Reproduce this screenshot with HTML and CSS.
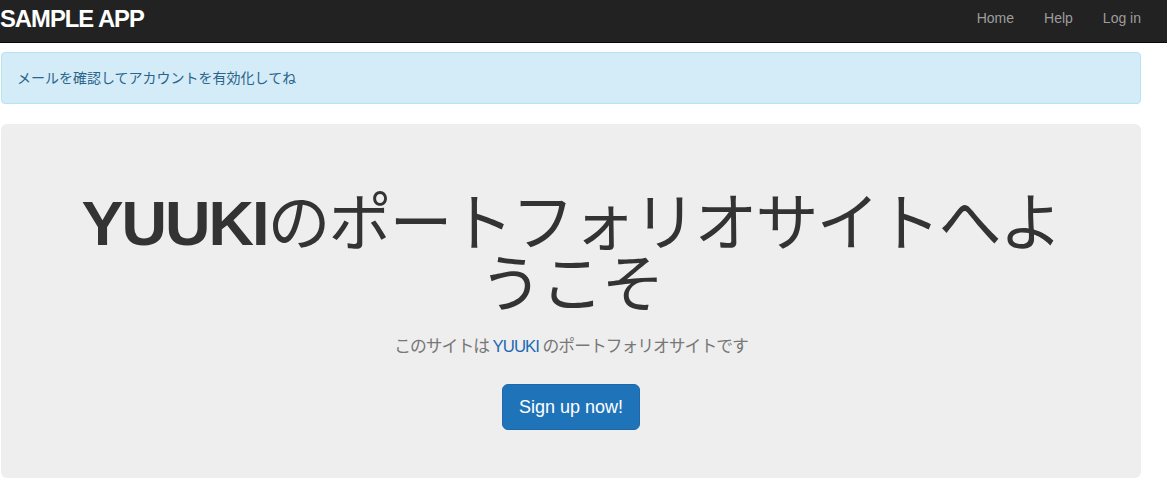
FILE: index.html
```html
<!DOCTYPE html>
<html lang="ja">
<head>
<meta charset="utf-8">
<title>Sample App</title>
<link rel="stylesheet" href="styles.css">
</head>
<body>
<header class="navbar">
  <div class="container nav-inner">
    <a class="logo" href="#">sample app</a>
    <nav class="nav-links">
      <a href="#">Home</a>
      <a href="#">Help</a>
      <a href="#">Log in</a>
    </nav>
  </div>
</header>
<main class="container">
  <div class="alert">メールを確認してアカウントを有効化してね</div>
  <section class="jumbotron">
    <h1 class="hero-title"><span class="hero-name">YUUKI</span>のポートフォリオサイトへようこそ</h1>
    <h2 class="hero-sub">このサイトは <a href="#">YUUKI</a> のポートフォリオサイトです</h2>
    <div class="hero-actions">
      <a class="btn-signup" href="#">Sign up now!</a>
    </div>
  </section>
</main>
</body>
</html>
```
FILE: styles.css
```css
* { box-sizing: border-box; }
html, body { margin: 0; padding: 0; }
body {
  font-family: "Liberation Sans", "Noto Sans CJK JP", sans-serif;
  font-size: 14px;
  line-height: 20px;
  color: #333;
  background: #fff;
  width: 1167px;
  height: 497px;
  overflow: hidden;
}
a { text-decoration: none; }
.container {
  width: 1140px;
  margin-left: 1px;
}
.navbar {
  background: #222;
  border-bottom: 1px solid #080808;
  height: 43px;
}
.nav-inner {
  display: flex;
  justify-content: space-between;
  align-items: flex-start;
}
.logo {
  display: block;
  color: #fff;
  font-weight: bold;
  font-size: 23.8px;
  line-height: 34px;
  letter-spacing: -1px;
  text-transform: uppercase;
  padding-top: 2px;
  margin-left: -1px;
}
.nav-links {
  display: flex;
  margin-right: -15px;
}
.nav-links a {
  color: #9d9d9d;
  padding: 8px 15px 0;
  line-height: 20px;
}
.alert {
  margin-top: 9px;
  margin-bottom: 20px;
  padding: 15px;
  background: #d4ebf8;
  border: 1px solid #b6e4f2;
  border-radius: 4px;
  color: #2a6489;
  line-height: 20px;
}
.jumbotron {
  background: #eee;
  border-radius: 6px;
  padding: 48px 60px;
  text-align: center;
}
.hero-title {
  margin: 21px 0 22px;
  font-size: 63px;
  line-height: 61px;
  letter-spacing: -2px;
  font-weight: 400;
  color: #333;
}
.hero-name { font-weight: bold; }
.hero-sub {
  margin: 0 0 27px;
  font-size: 16.8px;
  line-height: 20px;
  letter-spacing: -1px;
  font-weight: normal;
  color: #777;
}
.hero-sub a { color: #1e6bb4; }
.hero-actions {
  display: flex;
  justify-content: center;
}
.btn-signup {
  display: block;
  background: #1f74b9;
  border: 1px solid #1d68a8;
  border-radius: 6px;
  color: #fff;
  font-size: 18px;
  line-height: 24px;
  padding: 10px 16px;
}
```
